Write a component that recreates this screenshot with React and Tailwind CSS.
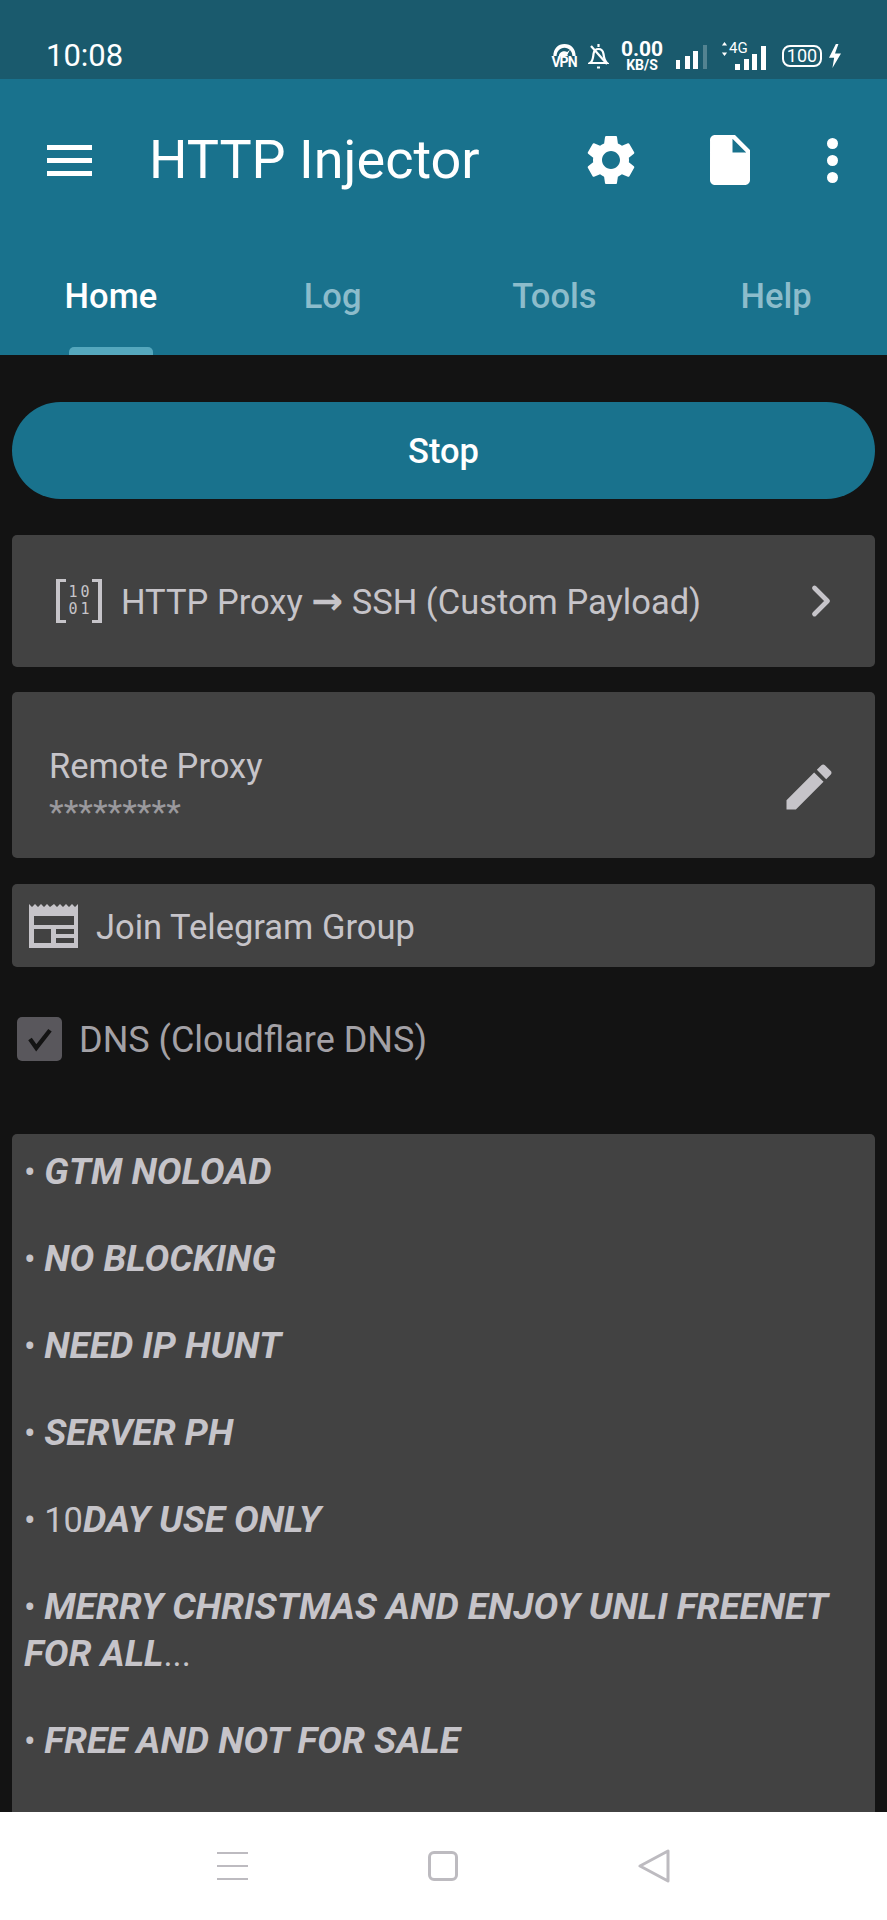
import { ChevronRight } from "lucide-react";

const font = { fontFamily: "Roboto, sans-serif" };

const StatusIcons = () => (
  <div className="flex items-center h-[28px] text-white">
    {/* vpn */}
    <div className="flex flex-col items-center w-[26px] mr-[11px]">
      <svg width="25" height="13" viewBox="0 0 26 14">
        <path d="M1 14C1 6 6 1 13 1s12 5 12 13h-3.500C21.500 9 18 5 13 5S4.500 9 4.500 14z" fill="currentColor" />
        <path d="M7 14c0-3 3-5 6-5 1 0 2 .2 3 .6L19 7l-3 6 1 1z" fill="currentColor" />
      </svg>
      <span className="text-[14px] leading-[13px] font-bold tracking-[-1px]">VPN</span>
    </div>
    {/* bell off */}
    <svg width="21" height="26" viewBox="0 0 21 26" fill="none" stroke="currentColor" strokeWidth="2.2" className="mr-[13px]">
      <path d="M2 20c3-2 3-5 3.500-9 .4-3 2.500-5 5-5s4.500 2 5 5c.5 4 1 7 3.500 9z" />
      <path d="M3 3l16 18" />
      <path d="M10.500 1v3M9 24.500h3" />
    </svg>
    <div className="flex flex-col items-center w-[40px] mr-[14px]">
      <span className="h-[17px] text-[21px] leading-[17px] font-bold">0.00</span>
      <span className="h-[13px] mt-[1px] text-[14px] leading-[13px] font-bold">KB/S</span>
    </div>
    <svg width="31" height="24" viewBox="0 0 31 24" className="mr-[13px] mt-[2px]">
      <rect x="0" y="15" width="4" height="9" fill="currentColor" />
      <rect x="9" y="11" width="5" height="13" fill="currentColor" />
      <rect x="17" y="6" width="5" height="18" fill="currentColor" />
      <rect x="27" y="0" width="4" height="24" fill="currentColor" opacity="0.25" />
    </svg>
    <div className="relative w-[46px] h-[28px] mr-[16px]">
      <svg width="7" height="14" viewBox="0 0 8 16" className="absolute left-[1px] top-0">
        <path d="M4 0l3 4H1zM4 16l-3-4h6z" fill="currentColor" />
      </svg>
      <span className="absolute left-[9px] top-[-2px] text-[15px] leading-[16px]">4G</span>
      <svg width="32" height="24" viewBox="0 0 32 24" className="absolute left-[15px] top-[4px]">
        <rect x="0" y="18" width="5" height="6" fill="currentColor" />
        <rect x="9" y="13" width="5" height="11" fill="currentColor" />
        <rect x="17" y="8" width="5" height="16" fill="currentColor" />
        <rect x="26" y="0" width="5" height="24" fill="currentColor" />
      </svg>
    </div>
    <div className="flex items-center justify-center w-[40px] h-[22px] mr-[5px] border-2 border-white rounded-[8px] text-[18px] leading-none">100</div>
    <svg width="16" height="24" viewBox="0 0 16 28">
      <path d="M9 0L1 16h6l-2 12 10-17H8l4-11z" fill="currentColor" />
    </svg>
  </div>
);

const Tab = ({ label, active }) => (
  <div className="relative flex-1 flex justify-center pt-[35px]">
    <span className={`text-[34.5px] leading-[40px] font-medium ${active ? "text-white" : "text-[#8cbccb]"}`}>{label}</span>
    {active && <div className="absolute bottom-0 left-[69px] w-[84px] h-[8px] rounded-t-[5px] bg-[#55a7bd]" />}
  </div>
);

const Note = ({ children }) => (
  <p className="text-[34.5px] leading-[47px] mb-[40px]">
    <span>• </span>
    {children}
  </p>
);

const Bold = ({ children }) => <b className="text-[37px] leading-[40px] font-bold italic">{children}</b>;

export default function App() {
  return (
    <div className="h-[1920px] w-[887px] overflow-hidden flex flex-col bg-[#131313]" style={font}>
      {/* Status bar */}
      <div className="h-[79px] shrink-0 bg-[#1a5a6d] flex items-center justify-between pl-[46px] pr-[44px] pt-[33px]">
        <span className="text-[31px] leading-[36px] text-white">10:08</span>
        <StatusIcons />
      </div>

      {/* Toolbar + tabs */}
      <div className="h-[276px] shrink-0 bg-[#19728d] flex flex-col">
        <div className="h-[162px] shrink-0 flex items-center pl-[47px] pr-[49px] text-white">
          <div className="flex flex-col gap-[8px] w-[45px]">
            <div className="h-[5px] bg-white" />
            <div className="h-[5px] bg-white" />
            <div className="h-[5px] bg-white" />
          </div>
          <span className="ml-[57px] text-[54px] leading-[60px]">HTTP Injector</span>
          <div className="flex items-center ml-auto">
            <svg width="60" height="60" viewBox="0 0 24 24" fill="currentColor">
              <path d="M19.14 12.94c.04-.3.06-.61.06-.94 0-.32-.02-.64-.07-.94l2.03-1.58c.18-.14.23-.41.12-.61l-1.92-3.32c-.12-.22-.37-.29-.59-.22l-2.39.96c-.5-.38-1.03-.7-1.62-.94l-.36-2.54c-.04-.24-.24-.41-.48-.41h-3.84c-.24 0-.43.17-.47.41l-.36 2.54c-.59.24-1.13.57-1.62.94l-2.39-.96c-.22-.08-.47 0-.59.22L2.74 8.87c-.12.21-.08.47.12.61l2.03 1.58c-.05.3-.09.63-.09.94s.02.64.07.94l-2.03 1.58c-.18.14-.23.41-.12.61l1.92 3.32c.12.22.37.29.59.22l2.39-.96c.5.38 1.03.7 1.62.94l.36 2.54c.05.24.24.41.48.41h3.84c.24 0 .44-.17.47-.41l.36-2.54c.59-.24 1.13-.56 1.62-.94l2.39.96c.22.08.47 0 .59-.22l1.92-3.32c.12-.22.07-.47-.12-.61l-2.01-1.58zM12 15.6c-1.98 0-3.6-1.62-3.6-3.6s1.62-3.6 3.6-3.6 3.6 1.62 3.6 3.6-1.62 3.6-3.6 3.6z" />
            </svg>
            <svg width="60" height="60" viewBox="0 0 24 24" fill="currentColor" className="ml-[59px]">
              <path d="M6 2c-1.100 0-1.990.9-1.990 2L4 20c0 1.100.89 2 1.990 2H18c1.100 0 2-.9 2-2V8l-6-6H6zm7 7V3.500L18.500 9H13z" />
            </svg>
            <div className="flex flex-col gap-[6px] ml-[67px] w-[11px]">
              <div className="h-[11px] rounded-full bg-white" />
              <div className="h-[11px] rounded-full bg-white" />
              <div className="h-[11px] rounded-full bg-white" />
            </div>
          </div>
        </div>
        <div className="flex flex-1">
          <Tab label="Home" active />
          <Tab label="Log" />
          <Tab label="Tools" />
          <Tab label="Help" />
        </div>
      </div>

      {/* Content */}
      <div className="flex-1 min-h-0 overflow-hidden px-[12px] pt-[47px] flex flex-col text-[#c6c4c9]">
        <button className="h-[97px] shrink-0 pt-[2px] rounded-full bg-[#19728d] text-white text-[34.5px] font-medium">Stop</button>

        <div className="mt-[36px] h-[132px] shrink-0 rounded-[5px] bg-[#424242] flex items-center pl-[44px] pr-[28px]">
          <div className="relative w-[46px] h-[44px] shrink-0 border-x-[4px] border-[#c6c4c9] flex flex-col justify-center items-center text-[15px] leading-[17px] tracking-[3px]" style={{ fontFamily: "'DejaVu Sans Mono', monospace" }}>
            <span className="pl-[3px]">10</span>
            <span className="pl-[3px]">01</span>
            <div className="absolute -left-[4px] top-0 w-[10px] h-[3px] bg-[#c6c4c9]" />
            <div className="absolute -left-[4px] bottom-0 w-[10px] h-[3px] bg-[#c6c4c9]" />
            <div className="absolute -right-[4px] top-0 w-[10px] h-[3px] bg-[#c6c4c9]" />
            <div className="absolute -right-[4px] bottom-0 w-[10px] h-[3px] bg-[#c6c4c9]" />
          </div>
          <span className="ml-[19px] pt-[2px] text-[34.5px] leading-[40px]">
            HTTP Proxy <span className="text-[38px] leading-[30px] font-bold" style={{ fontFamily: "'DejaVu Sans', sans-serif" }}>→</span> SSH (Custom Payload)
          </span>
          <ChevronRight className="ml-auto" size={52} strokeWidth={2.2} />
        </div>

        <div className="mt-[25px] h-[166px] shrink-0 rounded-[5px] bg-[#424242] flex items-center pl-[37px] pr-[36px]">
          <div className="flex flex-col pt-[20px]">
            <span className="text-[34.5px] leading-[44px]">Remote Proxy</span>
            <span className="text-[34px] leading-[28px] text-[#9a999d] mt-[10px]">*********</span>
          </div>
          <svg width="60" height="60" viewBox="0 0 24 24" fill="currentColor" className="ml-auto mt-[24px]">
            <path d="M3 17.250V21h3.750L17.810 9.940l-3.750-3.750L3 17.250zM20.710 7.040c.39-.39.39-1.020 0-1.410l-2.340-2.340c-.39-.39-1.020-.39-1.410 0l-1.830 1.830 3.750 3.750 1.830-1.830z" />
          </svg>
        </div>

        <div className="mt-[26px] h-[83px] shrink-0 rounded-[5px] bg-[#424242] flex items-center pl-[17px]">
          <svg width="50" height="44" viewBox="0 0 50 44" fill="currentColor">
            <path fillRule="evenodd" d="M0 0l3 3 3-3 3 3 3-3 3 3 3-3 3 3 4-3 3 3 3-3 3 3 3-3 3 3 3-3 3 3 3-3v44H0zM5 12v9h40v-9zM5 25v14h17V25zM27 25v5h18v-5zM27 34v5h18v-5z" />
          </svg>
          <span className="ml-[17px] pt-[2px] text-[34.5px] leading-[40px]">Join Telegram Group</span>
        </div>

        <div className="mt-[50px] h-[44px] shrink-0 flex items-center pl-[5px] text-[#a3a1a6]">
          <div className="w-[45px] h-[44px] rounded-[5px] bg-[#59575c] flex items-center justify-center">
            <svg width="30" height="30" viewBox="0 0 24 24" fill="none" stroke="#131313" strokeWidth="3.5">
              <path d="M4 12l5 7L20 5" />
            </svg>
          </div>
          <span className="ml-[17px] pt-[2px] text-[36px] leading-[40px]">DNS (Cloudflare DNS)</span>
        </div>

        <div className="mt-[73px] flex-1 rounded-t-[5px] bg-[#424242] pl-[12px] pr-[12px] pt-[15px]">
          <Note><Bold>GTM NOLOAD</Bold></Note>
          <Note><Bold>NO BLOCKING</Bold></Note>
          <Note><Bold>NEED IP HUNT</Bold></Note>
          <Note><Bold>SERVER PH</Bold></Note>
          <Note>10<Bold>DAY USE ONLY</Bold></Note>
          <Note><Bold>MERRY CHRISTMAS AND ENJOY UNLI FREENET FOR ALL</Bold>...</Note>
          <Note><Bold>FREE AND NOT FOR SALE</Bold></Note>
        </div>
      </div>

      {/* Nav bar */}
      <div className="h-[108px] shrink-0 bg-white flex items-center justify-center gap-[180px] text-[#bdbbc0]">
        <div className="flex flex-col gap-[11px] w-[31px]">
          <div className="h-[2px] bg-current" />
          <div className="h-[2px] bg-current" />
          <div className="h-[2px] bg-current" />
        </div>
        <div className="w-[30px] h-[30px] border-[3px] border-current rounded-[6px]" />
        <svg width="32" height="34" viewBox="0 0 32 34" fill="none" stroke="currentColor" strokeWidth="3" strokeLinejoin="round">
          <path d="M30 2v30L2 17z" />
        </svg>
      </div>
    </div>
  );
}
